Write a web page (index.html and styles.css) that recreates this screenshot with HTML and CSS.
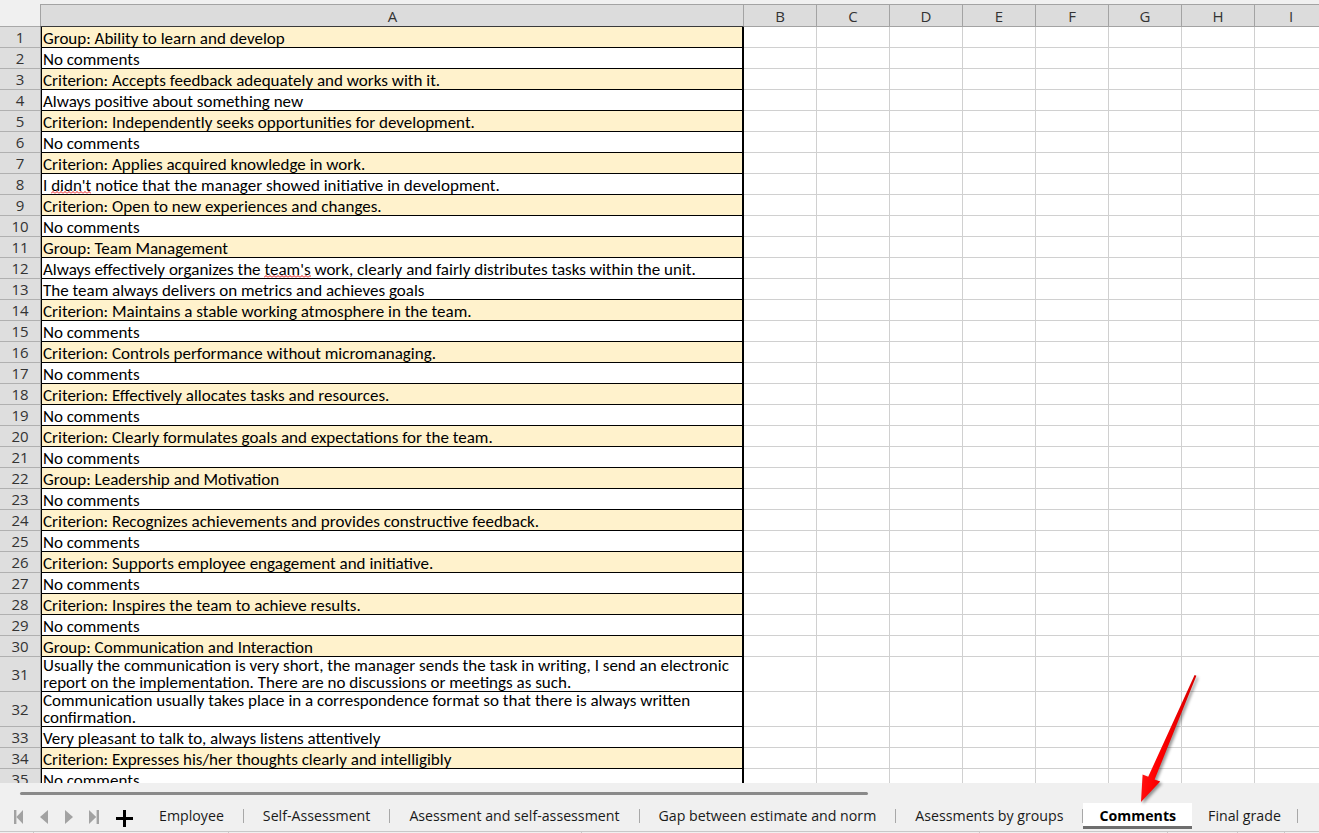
FILE: index.html
```html
<!DOCTYPE html>
<html lang="en">
<head>
<meta charset="utf-8">
<title>Comments</title>
<link rel="stylesheet" href="styles.css">
</head>
<body>
<div class="window">
  <div class="sheet">
    <div class="head">
      <div class="corner"></div>
      <div class="col a">A</div><div class="col">B</div><div class="col">C</div><div class="col">D</div><div class="col">E</div><div class="col">F</div><div class="col">G</div><div class="col">H</div><div class="col">I</div>
    </div>
    <div class="row"><div class="rh">1</div><div class="a hl">Group: Ability to learn and develop</div><i class="c"></i><i class="c"></i><i class="c"></i><i class="c"></i><i class="c"></i><i class="c"></i><i class="c"></i><i class="c"></i></div>
    <div class="row"><div class="rh">2</div><div class="a">No comments</div><i class="c"></i><i class="c"></i><i class="c"></i><i class="c"></i><i class="c"></i><i class="c"></i><i class="c"></i><i class="c"></i></div>
    <div class="row"><div class="rh">3</div><div class="a hl">Criterion: Accepts feedback adequately and works with it.</div><i class="c"></i><i class="c"></i><i class="c"></i><i class="c"></i><i class="c"></i><i class="c"></i><i class="c"></i><i class="c"></i></div>
    <div class="row"><div class="rh">4</div><div class="a">Always positive about something new</div><i class="c"></i><i class="c"></i><i class="c"></i><i class="c"></i><i class="c"></i><i class="c"></i><i class="c"></i><i class="c"></i></div>
    <div class="row"><div class="rh">5</div><div class="a hl">Criterion: Independently seeks opportunities for development.</div><i class="c"></i><i class="c"></i><i class="c"></i><i class="c"></i><i class="c"></i><i class="c"></i><i class="c"></i><i class="c"></i></div>
    <div class="row"><div class="rh">6</div><div class="a">No comments</div><i class="c"></i><i class="c"></i><i class="c"></i><i class="c"></i><i class="c"></i><i class="c"></i><i class="c"></i><i class="c"></i></div>
    <div class="row"><div class="rh">7</div><div class="a hl">Criterion: Applies acquired knowledge in work.</div><i class="c"></i><i class="c"></i><i class="c"></i><i class="c"></i><i class="c"></i><i class="c"></i><i class="c"></i><i class="c"></i></div>
    <div class="row"><div class="rh">8</div><div class="a">I <span class="typo">didn't</span> notice that the manager showed initiative in development.</div><i class="c"></i><i class="c"></i><i class="c"></i><i class="c"></i><i class="c"></i><i class="c"></i><i class="c"></i><i class="c"></i></div>
    <div class="row"><div class="rh">9</div><div class="a hl">Criterion: Open to new experiences and changes.</div><i class="c"></i><i class="c"></i><i class="c"></i><i class="c"></i><i class="c"></i><i class="c"></i><i class="c"></i><i class="c"></i></div>
    <div class="row"><div class="rh">10</div><div class="a">No comments</div><i class="c"></i><i class="c"></i><i class="c"></i><i class="c"></i><i class="c"></i><i class="c"></i><i class="c"></i><i class="c"></i></div>
    <div class="row"><div class="rh">11</div><div class="a hl">Group: Team Management</div><i class="c"></i><i class="c"></i><i class="c"></i><i class="c"></i><i class="c"></i><i class="c"></i><i class="c"></i><i class="c"></i></div>
    <div class="row"><div class="rh">12</div><div class="a">Always effectively organizes the <span class="typo">team's</span> work, clearly and fairly distributes tasks within the unit.</div><i class="c"></i><i class="c"></i><i class="c"></i><i class="c"></i><i class="c"></i><i class="c"></i><i class="c"></i><i class="c"></i></div>
    <div class="row"><div class="rh">13</div><div class="a">The team always delivers on metrics and achieves goals</div><i class="c"></i><i class="c"></i><i class="c"></i><i class="c"></i><i class="c"></i><i class="c"></i><i class="c"></i><i class="c"></i></div>
    <div class="row"><div class="rh">14</div><div class="a hl">Criterion: Maintains a stable working atmosphere in the team.</div><i class="c"></i><i class="c"></i><i class="c"></i><i class="c"></i><i class="c"></i><i class="c"></i><i class="c"></i><i class="c"></i></div>
    <div class="row"><div class="rh">15</div><div class="a">No comments</div><i class="c"></i><i class="c"></i><i class="c"></i><i class="c"></i><i class="c"></i><i class="c"></i><i class="c"></i><i class="c"></i></div>
    <div class="row"><div class="rh">16</div><div class="a hl">Criterion: Controls performance without micromanaging.</div><i class="c"></i><i class="c"></i><i class="c"></i><i class="c"></i><i class="c"></i><i class="c"></i><i class="c"></i><i class="c"></i></div>
    <div class="row"><div class="rh">17</div><div class="a">No comments</div><i class="c"></i><i class="c"></i><i class="c"></i><i class="c"></i><i class="c"></i><i class="c"></i><i class="c"></i><i class="c"></i></div>
    <div class="row"><div class="rh">18</div><div class="a hl">Criterion: Effectively allocates tasks and resources.</div><i class="c"></i><i class="c"></i><i class="c"></i><i class="c"></i><i class="c"></i><i class="c"></i><i class="c"></i><i class="c"></i></div>
    <div class="row"><div class="rh">19</div><div class="a">No comments</div><i class="c"></i><i class="c"></i><i class="c"></i><i class="c"></i><i class="c"></i><i class="c"></i><i class="c"></i><i class="c"></i></div>
    <div class="row"><div class="rh">20</div><div class="a hl">Criterion: Clearly formulates goals and expectations for the team.</div><i class="c"></i><i class="c"></i><i class="c"></i><i class="c"></i><i class="c"></i><i class="c"></i><i class="c"></i><i class="c"></i></div>
    <div class="row"><div class="rh">21</div><div class="a">No comments</div><i class="c"></i><i class="c"></i><i class="c"></i><i class="c"></i><i class="c"></i><i class="c"></i><i class="c"></i><i class="c"></i></div>
    <div class="row"><div class="rh">22</div><div class="a hl">Group: Leadership and Motivation</div><i class="c"></i><i class="c"></i><i class="c"></i><i class="c"></i><i class="c"></i><i class="c"></i><i class="c"></i><i class="c"></i></div>
    <div class="row"><div class="rh">23</div><div class="a">No comments</div><i class="c"></i><i class="c"></i><i class="c"></i><i class="c"></i><i class="c"></i><i class="c"></i><i class="c"></i><i class="c"></i></div>
    <div class="row"><div class="rh">24</div><div class="a hl">Criterion: Recognizes achievements and provides constructive feedback.</div><i class="c"></i><i class="c"></i><i class="c"></i><i class="c"></i><i class="c"></i><i class="c"></i><i class="c"></i><i class="c"></i></div>
    <div class="row"><div class="rh">25</div><div class="a">No comments</div><i class="c"></i><i class="c"></i><i class="c"></i><i class="c"></i><i class="c"></i><i class="c"></i><i class="c"></i><i class="c"></i></div>
    <div class="row"><div class="rh">26</div><div class="a hl">Criterion: Supports employee engagement and initiative.</div><i class="c"></i><i class="c"></i><i class="c"></i><i class="c"></i><i class="c"></i><i class="c"></i><i class="c"></i><i class="c"></i></div>
    <div class="row"><div class="rh">27</div><div class="a">No comments</div><i class="c"></i><i class="c"></i><i class="c"></i><i class="c"></i><i class="c"></i><i class="c"></i><i class="c"></i><i class="c"></i></div>
    <div class="row"><div class="rh">28</div><div class="a hl">Criterion: Inspires the team to achieve results.</div><i class="c"></i><i class="c"></i><i class="c"></i><i class="c"></i><i class="c"></i><i class="c"></i><i class="c"></i><i class="c"></i></div>
    <div class="row"><div class="rh">29</div><div class="a">No comments</div><i class="c"></i><i class="c"></i><i class="c"></i><i class="c"></i><i class="c"></i><i class="c"></i><i class="c"></i><i class="c"></i></div>
    <div class="row"><div class="rh">30</div><div class="a hl">Group: Communication and Interaction</div><i class="c"></i><i class="c"></i><i class="c"></i><i class="c"></i><i class="c"></i><i class="c"></i><i class="c"></i><i class="c"></i></div>
    <div class="row tall"><div class="rh">31</div><div class="a">Usually the communication is very short, the manager sends the task in writing, I send an electronic report on the implementation. There are no discussions or meetings as such.</div><i class="c"></i><i class="c"></i><i class="c"></i><i class="c"></i><i class="c"></i><i class="c"></i><i class="c"></i><i class="c"></i></div>
    <div class="row tall"><div class="rh">32</div><div class="a">Communication usually takes place in a correspondence format so that there is always written confirmation.</div><i class="c"></i><i class="c"></i><i class="c"></i><i class="c"></i><i class="c"></i><i class="c"></i><i class="c"></i><i class="c"></i></div>
    <div class="row"><div class="rh">33</div><div class="a">Very pleasant to talk to, always listens attentively</div><i class="c"></i><i class="c"></i><i class="c"></i><i class="c"></i><i class="c"></i><i class="c"></i><i class="c"></i><i class="c"></i></div>
    <div class="row"><div class="rh">34</div><div class="a hl">Criterion: Expresses his/her thoughts clearly and intelligibly</div><i class="c"></i><i class="c"></i><i class="c"></i><i class="c"></i><i class="c"></i><i class="c"></i><i class="c"></i><i class="c"></i></div>
    <div class="row"><div class="rh">35</div><div class="a">No comments</div><i class="c"></i><i class="c"></i><i class="c"></i><i class="c"></i><i class="c"></i><i class="c"></i><i class="c"></i><i class="c"></i></div>
  </div>

  <div class="tabbar">
    <div class="scroll"><div class="thumb"></div></div>
    <div class="tabrow">
      <div class="nav">
        <span class="btn"><svg width="9" height="14" viewBox="0 0 9 14"><rect x="0" y="0" width="2.4" height="14"/><polygon points="9,0 2.4,7 9,14"/></svg></span>
        <span class="btn"><svg width="8" height="14" viewBox="0 0 8 14"><polygon points="8,0 0,7 8,14"/></svg></span>
        <span class="btn"><svg width="8" height="14" viewBox="0 0 8 14"><polygon points="0,0 8,7 0,14"/></svg></span>
        <span class="btn"><svg width="10" height="14" viewBox="0 0 10 14"><polygon points="0,0 7.2,7 0,14"/><rect x="7.6" y="0" width="2.4" height="14"/></svg></span>
        <span class="btn plus"><svg width="17" height="17" viewBox="0 0 17 17"><rect x="0" y="7" width="17" height="3"/><rect x="7" y="0" width="3" height="17"/></svg></span>
      </div>
      <div class="tabs">
        <span class="tab">Employee</span><span class="sep"></span>
        <span class="tab">Self-Assessment</span><span class="sep"></span>
        <span class="tab">Asessment and self-assessment</span><span class="sep"></span>
        <span class="tab">Gap between estimate and norm</span><span class="sep"></span>
        <span class="tab">Asessments by groups</span><span class="sep"></span>
        <span class="tab active">Comments</span>
        <span class="tab after">Final grade</span><span class="sep"></span>
      </div>
    </div>
    <div class="status">
      <span class="seg s1"></span><span class="seg s2"></span><span class="seg s3"></span><span class="seg s4"></span><span class="seg s5"></span><span class="seg s6"></span><span class="seg s7"></span>
    </div>
  </div>

  <svg class="pointer" width="1319" height="833" viewBox="0 0 1319 833">
    <defs>
      <linearGradient id="redfill" x1="0" y1="0" x2="1" y2="0.4">
        <stop offset="0" stop-color="#ff2a2a"/>
        <stop offset="0.5" stop-color="#ff0000"/>
        <stop offset="1" stop-color="#c80000"/>
      </linearGradient>
    </defs>
    <polygon class="shape" points="1196.4,675.8 1154.6,779.6 1160.2,781.6 1141,802 1142.6,774.4 1148.2,776.8 1194.6,675.0" fill="url(#redfill)"/>
  </svg>
</div>
</body>
</html>
```
FILE: styles.css
```css
* { box-sizing: border-box; }

html, body {
  margin: 0;
  padding: 0;
}

body {
  width: 1319px;
  height: 833px;
  overflow: hidden;
  background: #f0f0f0;
  font-family: Carlito, "Liberation Sans", sans-serif;
}

.window {
  position: relative;
  width: 1319px;
  height: 833px;
}

/* ---------- grid ---------- */
.sheet {
  height: 783px;
  overflow: hidden;
  padding-top: 4px;
  background: #f0f0f0;
}

.head {
  display: grid;
  grid-template-columns: 40px 704px repeat(8, 73px);
  height: 23px;
}

.head .corner {
  border-bottom: 1px solid #a8a8a8;
}

.head .col {
  display: flex;
  align-items: center;
  justify-content: center;
  background: #dcdcdc;
  border-top: 1px solid #a3a3a3;
  border-right: 1px solid #a3a3a3;
  border-bottom: 1px solid #a3a3a3;
  font: 15px "Open Sans", sans-serif;
  color: #333;
  padding-top: 1px;
}

.head .col.a {
  border-left: 1px solid #a3a3a3;
  border-bottom-color: #3a3a3a;
}

.row {
  display: grid;
  grid-template-columns: 41px 703px repeat(8, 73px);
  grid-template-rows: minmax(0, 1fr);
  height: 21px;
}

.row.tall {
  height: 35px;
}

.rh {
  display: flex;
  align-items: center;
  justify-content: center;
  background: #dedede;
  border-right: 1px solid #9c9c9c;
  border-bottom: 1px solid #b0b0b0;
  font: 15px "Open Sans", sans-serif;
  color: #333;
}

.a {
  background: #fff;
  border-left: 1px solid #000;
  border-right: 2px solid #000;
  border-bottom: 1px solid #000;
  padding: 3px 0 0 1px;
  font-size: 17px;
  line-height: 17px;
  white-space: nowrap;
  color: #000;
}

.a.hl {
  background: #fff2cc;
}

.tall .a {
  white-space: normal;
  padding-top: 0;
  line-height: 17px;
}

.c {
  background: #fff;
  border-right: 1px solid #d0d0d0;
  border-bottom: 1px solid #d0d0d0;
}

/* spell-check squiggle, drawn as a repeating vector wave under the word */
.typo {
  background-image: url("data:image/svg+xml,%3Csvg xmlns='http://www.w3.org/2000/svg' width='4' height='3' viewBox='0 0 4 3'%3E%3Cpath d='M0 2.5L2 0.5L4 2.5' fill='none' stroke='%23e81010' stroke-width='1'/%3E%3C/svg%3E");
  background-repeat: repeat-x;
  background-size: 4px 3px;
  background-position: 0 calc(100% - 2px);
}

/* ---------- sheet tabs ---------- */
.tabbar {
  height: 50px;
  background: #f0f0f0;
  display: flex;
  flex-direction: column;
}

.scroll {
  height: 20px;
  padding: 9px 0 0 20px;
}

.thumb {
  width: 848px;
  height: 3px;
  background: #8a8a8a;
  border-radius: 2px;
}

.tabrow {
  height: 28px;
  display: flex;
  align-items: flex-start;
}

.nav {
  display: flex;
  height: 26px;
  padding-left: 6px;
}

.btn {
  width: 25px;
  height: 26px;
  padding-top: 2px;
  display: flex;
  align-items: center;
  justify-content: center;
  fill: #a2a2a2;
}

.btn.plus {
  margin-left: 6px;
  padding-top: 4px;
  fill: #000;
}

.tabs {
  display: flex;
  align-items: flex-start;
  margin-left: 3px;
}

.tab {
  height: 26px;
  padding: 2px 19px 0;
  display: flex;
  align-items: center;
  border-bottom: 3px solid transparent;
  font: 14.2px "Open Sans", sans-serif;
  color: #1a1a1a;
  white-space: nowrap;
}

.tab.active {
  padding: 2px 16px 0;
  background: #fff;
  border-bottom-color: #6e6e6e;
  font-weight: 700;
  color: #000;
}

.tab.after {
  padding: 2px 16px 0;
}

.sep {
  width: 1px;
  height: 14px;
  margin-top: 6px;
  background: #a8a8a8;
}

.status {
  height: 2px;
  display: flex;
  border-top: 1px solid #c8c8c8;
}

.seg { height: 100%; border-right: 1px solid #c8c8c8; }
.s1 { width: 34px; }
.s2 { width: 195px; }
.s3 { width: 353px; }
.s4 { width: 398px; }
.s5 { width: 188px; }
.s6 { width: 70px; }
.s7 { width: 47px; }

/* ---------- annotation arrow ---------- */
.pointer {
  position: absolute;
  left: 0;
  top: 0;
  pointer-events: none;
}

.pointer .shape {
  filter: drop-shadow(2px 2px 1.5px rgba(0, 0, 0, 0.4));
}
```
